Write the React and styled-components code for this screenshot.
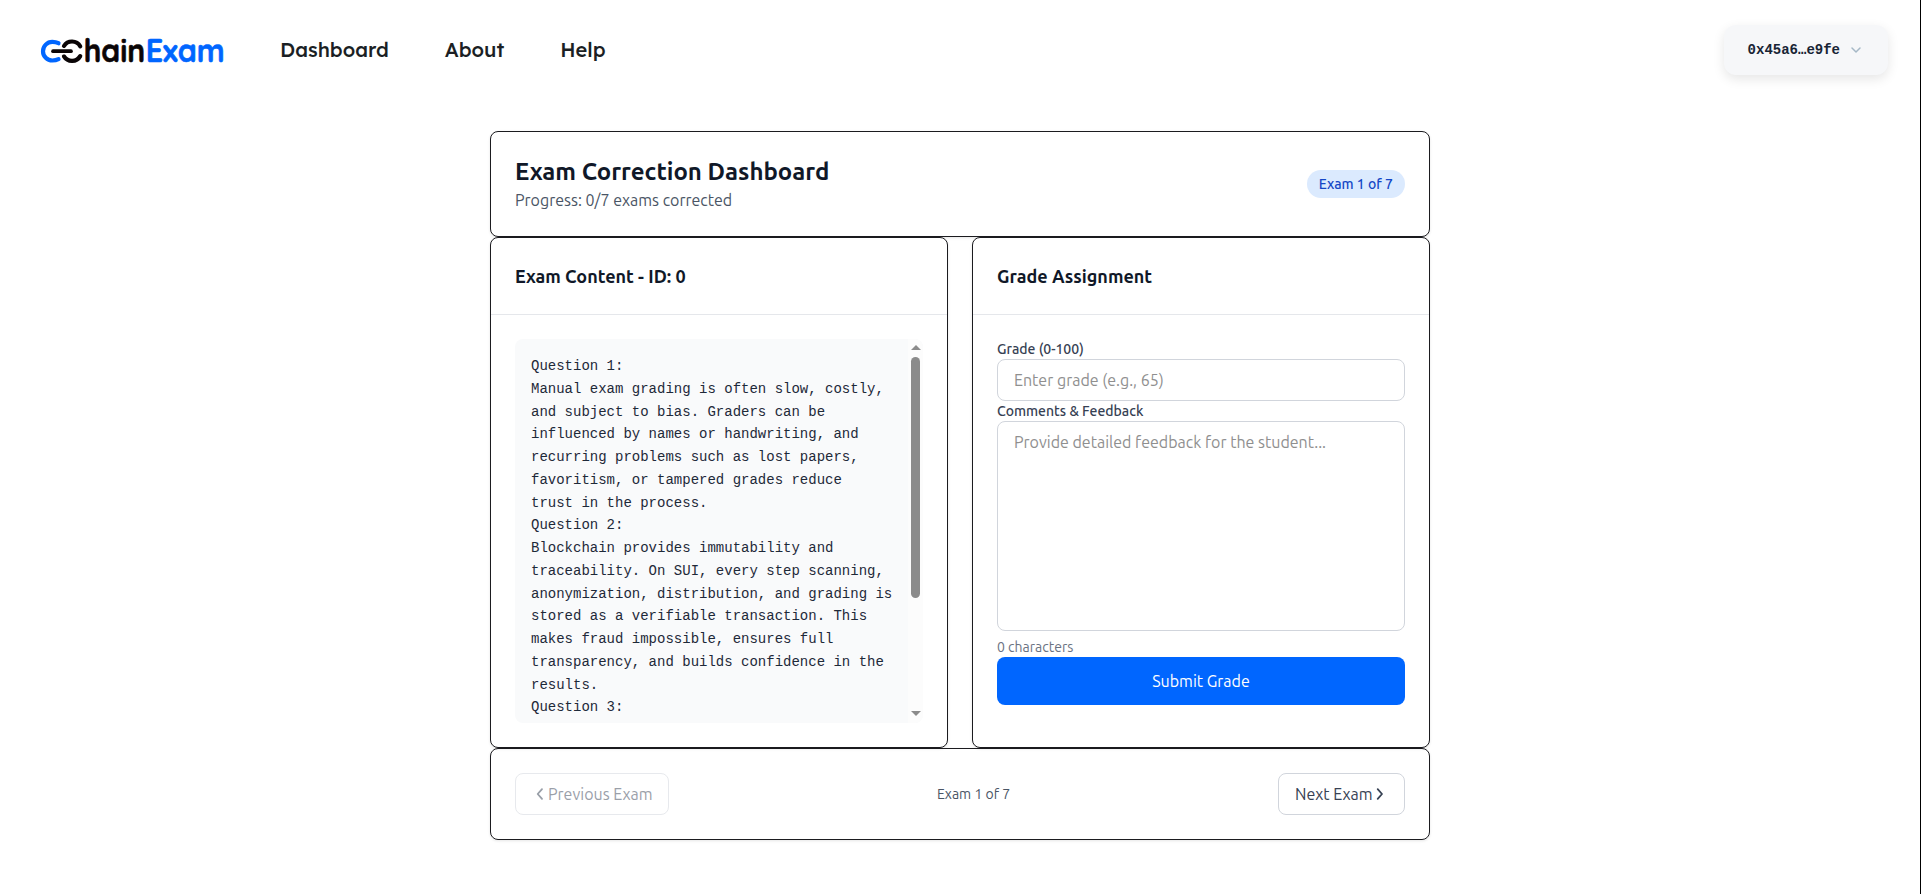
import React from "react";
import styled, { createGlobalStyle, css } from "styled-components";

const GlobalStyle = createGlobalStyle`
  *, *::before, *::after { box-sizing: border-box; }
  body {
    margin: 0;
    background: #fff;
    font-family: "Ubuntu", "Noto Sans", sans-serif;
    font-size: 16px;
    line-height: 24px;
    color: #101828;
  }
  h1, h2, p, pre { margin: 0; }
  button, input, textarea { font: inherit; }
`;

const Page = styled.div`
  min-height: 100vh;
  border-right: 1px solid #000;
`;

const Header = styled.header`
  display: flex;
  align-items: center;
  height: 100px;
  padding: 0 32px 0 36px;
`;

const Logo = styled.svg`
  flex: none;
  width: 196px;
  height: 48px;
  overflow: visible;
  font-family: "Quicksand", "Lexend", "Inter", sans-serif;
  font-size: 32px;
  font-weight: 700;
`;

const Wordmark = styled.text`
  fill: ${({ $color }) => $color};
  stroke: ${({ $color }) => $color};
  stroke-width: 0.6px;
  stroke-linejoin: round;
`;

const Nav = styled.nav`
  display: flex;
  gap: 56px;
  margin-left: 48px;
`;

const NavLink = styled.a`
  font-family: "Lexend", "Open Sans", sans-serif;
  font-size: 20px;
  line-height: 28px;
  font-weight: 500;
  color: #1b1f24;
`;

const Wallet = styled.button`
  display: flex;
  align-items: center;
  gap: 8px;
  height: 50px;
  margin-left: auto;
  padding: 0 24px;
  border: 0;
  border-radius: 12px;
  background: #f6f7f9;
  box-shadow: 0 4px 12px rgba(0, 0, 0, 0.1);
  color: #182435;
  font-family: "Liberation Mono", monospace;
  font-size: 14px;
  font-weight: 700;
`;

const Main = styled.main`
  width: 940px;
  margin: 31px auto 0 490px;
`;

const Card = styled.section`
  border: 1px solid #1b1b1f;
  border-radius: 8px;
  background: #fff;
  box-shadow: 0 1px 3px rgba(0, 0, 0, 0.1);
`;

const BarCard = styled(Card)`
  display: flex;
  align-items: center;
  justify-content: space-between;
  padding: 24px;
`;

const Title = styled.h1`
  font-size: 24px;
  line-height: 32px;
  font-weight: 600;
`;

const Muted = styled.p`
  color: #4a5565;
  ${({ $small }) => $small && css`font-size: 14px; line-height: 20px;`}
`;

const Badge = styled.span`
  padding: 4px 12px;
  border-radius: 14px;
  background: #dbeafe;
  color: #1447c6;
  font-size: 14px;
  line-height: 20px;
  font-weight: 500;
`;

const Columns = styled.div`
  display: grid;
  grid-template-columns: 1fr 1fr;
  gap: 24px;
`;

const CardHeader = styled.div`
  padding: 24px;
  border-bottom: 1px solid #e5e7eb;
`;

const CardTitle = styled.h2`
  font-size: 18px;
  line-height: 28px;
  font-weight: 600;
`;

const CardBody = styled.div`
  padding: 24px;
`;

const Viewer = styled.div`
  display: flex;
  height: 384px;
  border-radius: 8px;
  overflow: hidden;
  background: #f9fafb;
`;

const ExamText = styled.pre`
  flex: 1;
  padding: 16px 0 0 16px;
  overflow: hidden;
  color: #1e2939;
  font-family: "Liberation Mono", monospace;
  font-size: 14px;
  line-height: 22.75px;
`;

const Scrollbar = styled.div`
  display: flex;
  flex-direction: column;
  align-items: center;
  justify-content: space-between;
  width: 15px;
  padding: 6px 0 7px;
  background: #fcfcfc;
`;

const Arrow = styled.span`
  border: 4.5px solid transparent;
  border-width: 0 5px 5px;
  border-bottom-color: #8b8b8b;
  ${({ $down }) => $down && css`transform: rotate(180deg);`}
`;

const Thumb = styled.div`
  width: 9px;
  height: 241px;
  margin: 7px 0 auto;
  border-radius: 5px;
  background: #8b8b8b;
`;

const Field = styled.div`
  display: flex;
  flex-direction: column;
`;

const Label = styled.label`
  color: #364153;
  font-size: 14px;
  line-height: 20px;
  font-weight: 500;
`;

const control = css`
  display: block;
  width: 100%;
  border: 1px solid #d1d5dc;
  border-radius: 8px;
  background: #fff;
  padding: 8px 16px;
  outline: none;
  &::placeholder { color: #8f8f8f; opacity: 1; }
`;

const Input = styled.input`
  ${control}
  height: 42px;
`;

const TextArea = styled.textarea`
  ${control}
  height: 210px;
  resize: none;
`;

const Counter = styled.p`
  margin-top: 6px;
  color: #6a7282;
  font-size: 14px;
  line-height: 20px;
`;

const Submit = styled.button`
  width: 100%;
  height: 48px;
  border: 0;
  border-radius: 8px;
  background: #06f;
  color: #fff;
`;

const PageButton = styled.button`
  display: flex;
  align-items: center;
  width: ${({ $width }) => $width}px;
  height: 42px;
  padding: 0 16px;
  border: 1px solid #d1d5dc;
  border-radius: 8px;
  background: #fff;
  color: #364153;
  white-space: nowrap;
  &:disabled { opacity: 0.5; }
`;

const Icon = styled.svg`
  flex: none;
  width: 16px;
  height: 16px;
  fill: none;
  stroke: ${({ $color }) => $color};
  stroke-width: ${({ $weight }) => $weight};
  stroke-linecap: round;
  stroke-linejoin: round;
`;

const Chevron = ({ d, color = "currentColor", weight = 1.8 }) => (
  <Icon viewBox="0 0 16 16" $color={color} $weight={weight}>
    <path d={d} />
  </Icon>
);

const EXAM = `Question 1:
Manual exam grading is often slow, costly,
and subject to bias. Graders can be
influenced by names or handwriting, and
recurring problems such as lost papers,
favoritism, or tampered grades reduce
trust in the process.
Question 2:
Blockchain provides immutability and
traceability. On SUI, every step scanning,
anonymization, distribution, and grading is
stored as a verifiable transaction. This
makes fraud impossible, ensures full
transparency, and builds confidence in the
results.
Question 3:`;

export default function App() {
  return (
    <Page>
      <GlobalStyle />
      <Header>
        <Logo viewBox="0 -6 196 48">
          <g fill="none" strokeLinecap="round">
            <path d="M22.5 11.2C20.5 10.2 18.5 9.9 16.3 9.9A9.3 9.3 0 0 0 16.3 28.5C18.5 28.5 20.5 28.2 22.5 27.2" stroke="#06f" strokeWidth="4.2" />
            <path d="M28 14A9.4 9.4 0 0 1 44.2 14.3M28 24.4A9.4 9.4 0 0 0 44.2 24.1" stroke="#0a0506" strokeWidth="4.2" />
            <path d="M17 19.2H35" stroke="#fff" strokeWidth="6" />
            <path d="M17 19.2H35" stroke="#0a0506" strokeWidth="3.7" />
          </g>
          <Wordmark $color="#0a0506" x="47.7" y="30.3" textLength="61.5" lengthAdjust="spacingAndGlyphs">hain</Wordmark>
          <Wordmark $color="#0066ff" x="109.7" y="30.3" textLength="79" lengthAdjust="spacingAndGlyphs">Exam</Wordmark>
        </Logo>
        <Nav>
          <NavLink>Dashboard</NavLink>
          <NavLink>About</NavLink>
          <NavLink>Help</NavLink>
        </Nav>
        <Wallet>
          0x45a6…e9fe
          <Chevron d="M4 6l4 4 4-4" color="#a5b8c6" weight={1.5} />
        </Wallet>
      </Header>
      <Main>
        <BarCard>
          <div>
            <Title>Exam Correction Dashboard</Title>
            <Muted>Progress: 0/7 exams corrected</Muted>
          </div>
          <Badge>Exam 1 of 7</Badge>
        </BarCard>
        <Columns>
          <Card>
            <CardHeader><CardTitle>Exam Content - ID: 0</CardTitle></CardHeader>
            <CardBody>
              <Viewer>
                <ExamText>{EXAM}</ExamText>
                <Scrollbar>
                  <Arrow />
                  <Thumb />
                  <Arrow $down />
                </Scrollbar>
              </Viewer>
            </CardBody>
          </Card>
          <Card>
            <CardHeader><CardTitle>Grade Assignment</CardTitle></CardHeader>
            <CardBody>
              <Field>
                <Label htmlFor="grade">Grade (0-100)</Label>
                <Input id="grade" placeholder="Enter grade (e.g., 65)" />
              </Field>
              <Field>
                <Label htmlFor="comments">Comments &amp; Feedback</Label>
                <TextArea id="comments" placeholder="Provide detailed feedback for the student..." />
              </Field>
              <Counter>0 characters</Counter>
              <Submit>Submit Grade</Submit>
            </CardBody>
          </Card>
        </Columns>
        <BarCard>
          <PageButton $width={154} disabled>
            <Chevron d="M10 3.2L5.7 8l4.3 4.8" />
            Previous Exam
          </PageButton>
          <Muted $small>Exam 1 of 7</Muted>
          <PageButton $width={127}>
            Next Exam
            <Chevron d="M5.7 3.2L10 8l-4.3 4.8" />
          </PageButton>
        </BarCard>
      </Main>
    </Page>
  );
}
